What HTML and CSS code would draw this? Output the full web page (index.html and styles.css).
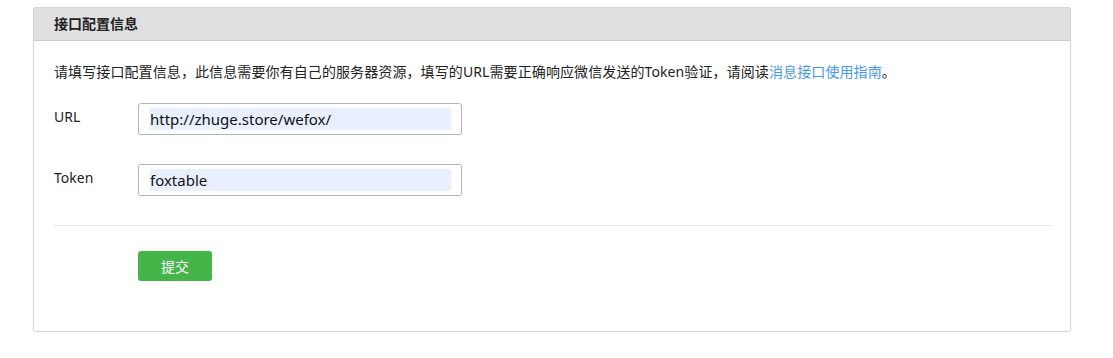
FILE: index.html
```html
<!DOCTYPE html>
<html lang="zh-CN">
<head>
  <meta charset="UTF-8" />
  <title>接口配置信息</title>
  <link rel="stylesheet" href="styles.css">
</head>
<body>

<div class="panel">
  <div class="panel-head">接口配置信息</div>
  <div class="panel-body">
    <p class="intro">请填写接口配置信息，此信息需要你有自己的服务器资源，填写的URL需要正确响应微信发送的Token验证，请阅读<a href="#">消息接口使用指南</a>。</p>

    <form class="config-form">
      <div class="form-row">
        <label for="url">URL</label>
        <input type="text" id="url" value="http://zhuge.store/wefox/">
      </div>
      <div class="form-row">
        <label for="token">Token</label>
        <input type="text" id="token" value="foxtable">
      </div>
      <div class="form-actions">
        <button type="submit" class="submit-btn">提交</button>
      </div>
    </form>
  </div>
</div>

</body>
</html>
```

FILE: styles.css
```css
* {
  box-sizing: border-box;
}

body {
  margin: 0;
  padding: 7px 0 0 33px;
  background: #fff;
  font-family: "Noto Sans", "Noto Sans CJK SC", sans-serif;
  font-size: 14px;
  color: #222;
}

.panel {
  width: 1038px;
  border: 1px solid #d6d6d6;
  border-radius: 2px;
}

.panel-head {
  height: 33px;
  line-height: 32px;
  padding-left: 20px;
  background: #e0e0e0;
  border-bottom: 1px solid #cbcbcb;
  font-weight: bold;
  color: #222;
}

.panel-body {
  padding: 21px 19px 50px 20px;
}

.intro {
  margin: 0;
  line-height: 20px;
  color: #222;
  letter-spacing: 0.1px;
}

.intro a {
  color: #459ae9;
  text-decoration: none;
}

.config-form {
  margin-top: 21px;
}

.form-row {
  display: flex;
  align-items: center;
  margin-bottom: 29px;
}

.form-row label {
  width: 84px;
  padding-bottom: 5px;
  color: #222;
}

.form-row input {
  width: 324px;
  height: 32px;
  padding: 4px 10px 4px 11px;
  border: 1px solid #b4b4b4;
  border-radius: 3px;
  background: #e8f0fe;
  background-clip: content-box;
  font-family: inherit;
  font-size: 15px;
  color: #111;
  outline: none;
}

.form-actions {
  border-top: 1px solid #e7e7eb;
  padding: 25px 0 0 84px;
}

.submit-btn {
  width: 74px;
  height: 30px;
  border: none;
  border-radius: 3px;
  background: #44b549;
  color: #fff;
  font-family: inherit;
  font-size: 14px;
  cursor: pointer;
}

.submit-btn:hover {
  background: #2f9833;
}
```
